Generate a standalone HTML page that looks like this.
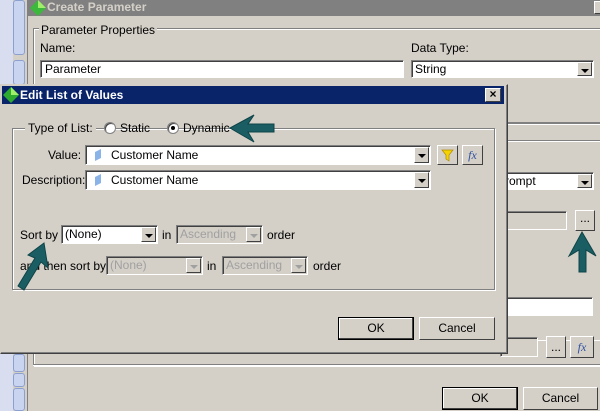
<!DOCTYPE html>
<html><head><style>
*{box-sizing:border-box;margin:0;padding:0}
body{width:600px;height:411px;overflow:hidden;background:#d4d0c8;font-family:"Liberation Sans",sans-serif;font-size:11px;color:#000;position:relative}
.a{position:absolute}
.in{position:absolute;background:#fff;border:1px solid;border-color:#808080 #fff #fff #808080;box-shadow:inset 1px 1px 0 #404040}
.dis{background:#d4d0c8;color:#a0a0a0}
.dd{position:absolute;top:1px;right:1px;bottom:1px;width:15px;background:#d4d0c8;border:1px solid;border-color:#fff #404040 #404040 #fff}
.dd:after{content:"";position:absolute;left:3px;top:6px;border:4px solid transparent;border-top:4px solid #000;border-bottom:0}
.dis .dd:after{border-top-color:#a0a0a0}
.btn{position:absolute;background:#d4d0c8;border:1px solid;border-color:#fff #404040 #404040 #fff;text-align:center;font-size:12px}
.grp{position:absolute;border:1px solid #808080;box-shadow:1px 1px 0 #fff, inset 1px 1px 0 #fff}
.t{position:absolute;white-space:nowrap;font-size:12px}
.hand{position:absolute;left:13px;width:12px;background:#c8d4f0;border:1px solid #8ca0d0;border-radius:3px}
</style></head><body>
<!-- left strip -->
<div class="a" style="left:0;top:0;width:27px;height:411px;background:#d4d0c8"></div>
<div class="a" style="left:0;top:0;width:13px;height:84px;background:#d8def0"></div>
<div class="a" style="left:0;top:354px;width:13px;height:57px;background:#d8def0"></div>
<div class="hand" style="top:0;height:55px"></div>
<div class="hand" style="top:60px;height:25px"></div>
<div class="hand" style="top:354px;height:18px"></div>
<div class="hand" style="top:373px;height:14px"></div>
<div class="hand" style="top:388px;height:23px"></div>
<!-- background dialog -->
<div class="a" style="left:27px;top:0;width:573px;height:411px;background:#d4d0c8;border-left:1px solid #808080"></div>
<div class="a" style="left:28px;top:0;width:572px;height:16px;background:#808080"></div>
<svg class="a" style="left:30px;top:0" width="16" height="16"><polygon points="8,0 16,8 8,16 0,8" fill="#3cb83c"/><polygon points="8,0 16,8 8,8" fill="#9fef6a"/></svg>
<div class="t" style="left:47px;top:0;color:#d4d0c8;font-weight:bold;font-size:12px">Create Parameter</div>
<div class="btn" style="left:594px;top:1px;width:10px;height:13px"></div>
<div class="grp" style="left:33px;top:28px;width:570px;height:95px;border-right:0"></div>
<div class="t" style="left:39px;top:23px;background:#d4d0c8;padding:0 2px">Parameter Properties</div>
<div class="t" style="left:40px;top:41px">Name:</div>
<div class="in" style="left:40px;top:60px;width:364px;height:18px"><span class="t" style="left:4px;top:1px">Parameter</span></div>
<div class="t" style="left:411px;top:41px">Data Type:</div>
<div class="in" style="left:411px;top:60px;width:183px;height:18px"><span class="t" style="left:3px;top:1px">String</span><div class="dd"></div></div>
<div class="a" style="left:33px;top:123px;width:567px;height:2px;border-top:1px solid #808080;border-bottom:1px solid #fff"></div>
<div class="a" style="left:33px;top:140px;width:567px;height:2px;border-top:1px solid #808080;border-bottom:1px solid #fff"></div>
<div class="grp" style="left:33px;top:340px;width:570px;height:26px;border-right:0;border-top:0"></div>
<div class="in" style="left:500px;top:172px;width:94px;height:18px"><span class="t" style="left:4px;top:1px">rompt</span><div class="dd"></div></div>
<div class="in dis" style="left:500px;top:211px;width:67px;height:19px;background:#d4d0c8"></div>
<div class="btn" style="left:575px;top:210px;width:20px;height:21px">...</div>
<div class="in" style="left:500px;top:297px;width:93px;height:19px"></div>
<div class="in" style="left:500px;top:337px;width:38px;height:20px;background:#d4d0c8"></div>
<div class="btn" style="left:546px;top:336px;width:20px;height:22px;line-height:20px">...</div>
<div class="btn" style="left:570px;top:336px;width:24px;height:22px;color:#3050a0;font-style:italic;font-family:'Liberation Serif',serif;line-height:20px">fx</div>
<div class="a" style="left:33px;top:364px;width:567px;height:2px;border-top:1px solid #808080;border-bottom:1px solid #fff"></div>
<div class="btn" style="left:442px;top:387px;width:76px;height:23px;line-height:21px;border:1px solid #000;box-shadow:inset -1px -1px 0 #404040,inset 1px 1px 0 #fff">OK</div>
<div class="btn" style="left:523px;top:387px;width:75px;height:23px;line-height:21px">Cancel</div>
<!-- up arrow right -->
<svg class="a" style="left:566px;top:228px" width="34" height="50"><path d="M16 4 L30 28 L20 22 L20 44 L13 44 L13 22 L3 28 Z" fill="#1a5e63" stroke="#0f4448" stroke-width="1"/></svg>

<!-- Edit List of Values dialog -->
<div class="a" style="left:0;top:84px;width:508px;height:270px;background:#d4d0c8;border:1px solid;border-color:#d4d0c8 #404040 #404040 #d4d0c8;box-shadow:inset -1px -1px 0 #808080"></div>
<div class="a" style="left:2px;top:86px;width:502px;height:18px;background:#0a246a"></div>
<svg class="a" style="left:3px;top:87px" width="16" height="16"><polygon points="8,0 16,8 8,16 0,8" fill="#2eaa2e"/><polygon points="8,0 16,8 8,8" fill="#9fef6a"/></svg>
<div class="t" style="left:20px;top:88px;color:#fff;font-weight:bold;font-size:12px">Edit List of Values</div>
<div class="btn" style="left:485px;top:88px;width:16px;height:14px;font-size:12px;line-height:11px;font-weight:bold">×</div>
<div class="grp" style="left:12px;top:128px;width:483px;height:162px"></div>
<div class="t" style="left:25px;top:121px;background:#d4d0c8;padding:0 3px">Type of List:</div>
<div class="a" style="left:104px;top:122px;width:12px;height:12px;border-radius:50%;background:#fff;border:1px solid #808080;box-shadow:inset 1px 1px 0 #404040"></div>
<div class="t" style="left:120px;top:121px">Static</div>
<div class="a" style="left:167px;top:122px;width:12px;height:12px;border-radius:50%;background:#fff;border:1px solid #808080;box-shadow:inset 1px 1px 0 #404040"></div>
<div class="a" style="left:171px;top:126px;width:4px;height:4px;border-radius:50%;background:#000"></div>
<div class="t" style="left:183px;top:121px">Dynamic</div>
<svg class="a" style="left:226px;top:112px" width="52" height="34"><path d="M4 16 L28 3 L22 12 L48 12 L48 20 L22 20 L28 30 Z" fill="#1a5e63" stroke="#0f4448" stroke-width="1"/></svg>
<div class="t" style="left:48px;top:148px">Value:</div>
<div class="in" style="left:85px;top:145px;width:346px;height:20px"><svg class="a" style="left:8px;top:3px" width="8" height="12"><polygon points="1,3 7,0 7,9 1,12" fill="#8ab4e8"/></svg><span class="t" style="left:25px;top:2px">Customer Name</span><div class="dd"></div></div>
<div class="btn" style="left:437px;top:145px;width:21px;height:20px"><svg width="19" height="18"><polygon points="4,4 15,4 11,9 11,15 8,13 8,9" fill="#f5d300" stroke="#b08a00" stroke-width="0.7"/></svg></div>
<div class="btn" style="left:462px;top:145px;width:21px;height:20px;color:#3050a0;font-style:italic;font-family:'Liberation Serif',serif;line-height:18px">fx</div>
<div class="t" style="left:22px;top:173px">Description:</div>
<div class="in" style="left:85px;top:170px;width:346px;height:20px"><svg class="a" style="left:8px;top:3px" width="8" height="12"><polygon points="1,3 7,0 7,9 1,12" fill="#8ab4e8"/></svg><span class="t" style="left:25px;top:2px">Customer Name</span><div class="dd"></div></div>
<div class="t" style="left:20px;top:228px">Sort by</div>
<div class="in" style="left:61px;top:225px;width:97px;height:19px"><span class="t" style="left:3px;top:1px">(None)</span><div class="dd"></div></div>
<div class="t" style="left:162px;top:228px">in</div>
<div class="in dis" style="left:176px;top:225px;width:87px;height:19px"><span class="t" style="left:3px;top:1px">Ascending</span><div class="dd"></div></div>
<div class="t" style="left:267px;top:228px">order</div>
<div class="t" style="left:20px;top:259px">and then sort by</div>
<div class="in dis" style="left:106px;top:256px;width:97px;height:19px"><span class="t" style="left:3px;top:1px">(None)</span><div class="dd"></div></div>
<div class="t" style="left:207px;top:259px">in</div>
<div class="in dis" style="left:222px;top:256px;width:86px;height:19px"><span class="t" style="left:3px;top:1px">Ascending</span><div class="dd"></div></div>
<div class="t" style="left:313px;top:259px">order</div>
<svg class="a" style="left:8px;top:238px" width="50" height="58"><path d="M36 5 L40 30 L33 24 L16 52 L10 48 L27 20 L20 17 Z" fill="#1a5e63" stroke="#0f4448" stroke-width="1"/></svg>
<div class="btn" style="left:338px;top:317px;width:76px;height:23px;line-height:21px;border:1px solid #000;box-shadow:inset -1px -1px 0 #404040,inset 1px 1px 0 #fff">OK</div>
<div class="btn" style="left:419px;top:317px;width:76px;height:23px;line-height:21px">Cancel</div>
</body></html>
